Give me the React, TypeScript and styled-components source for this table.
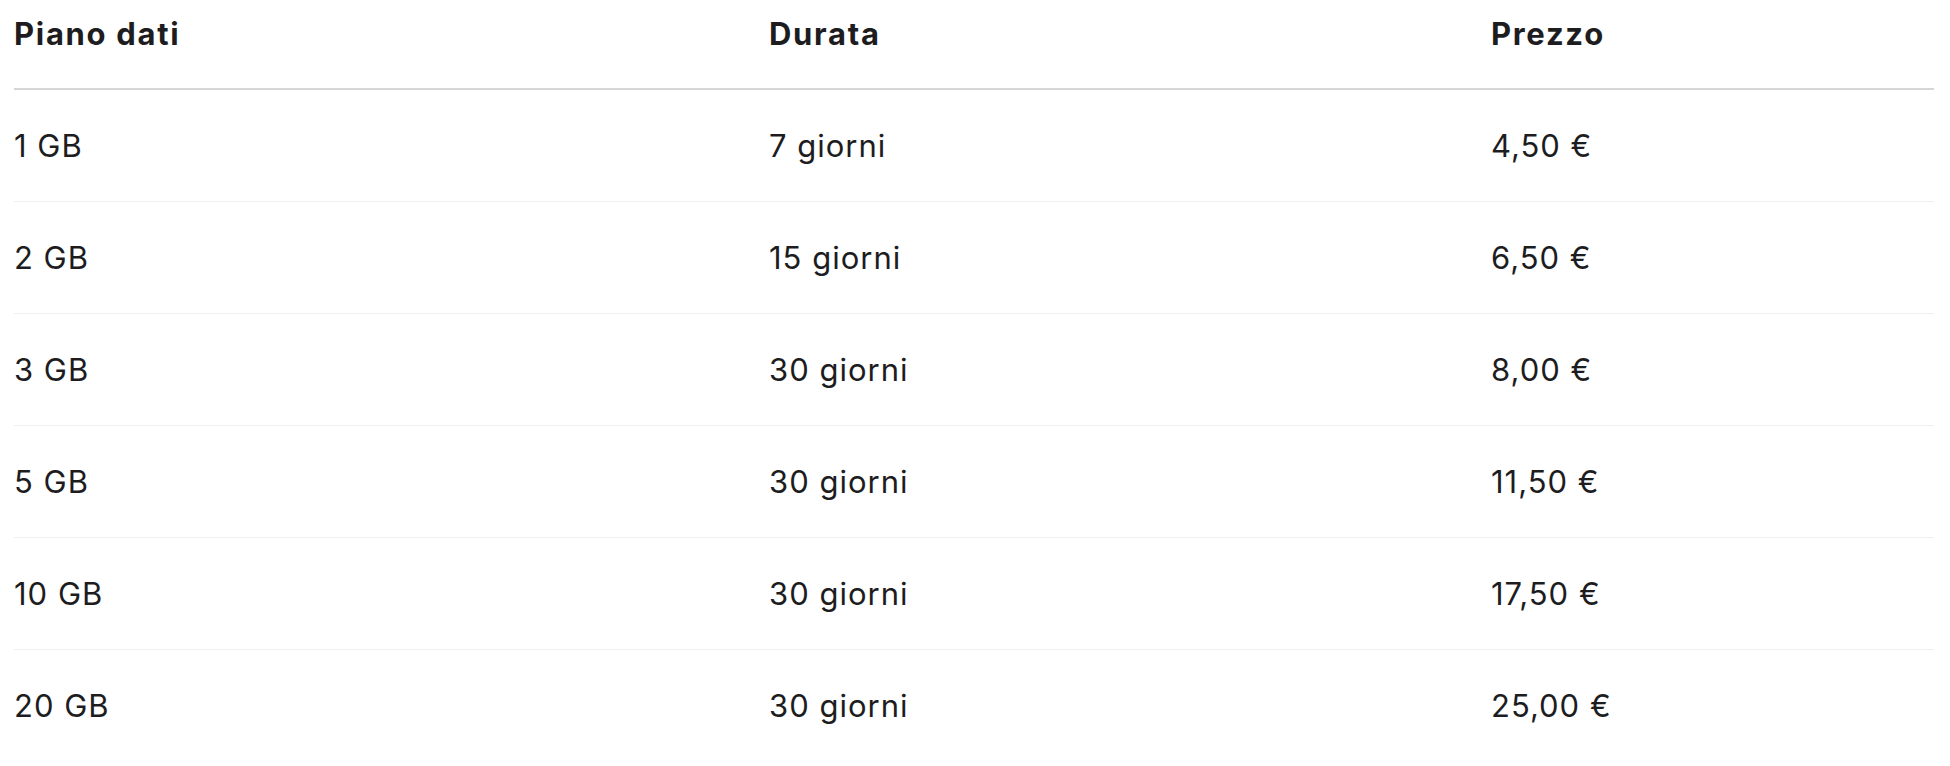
import styled, { createGlobalStyle } from 'styled-components'

const GlobalStyle = createGlobalStyle`
  html, body {
    margin: 0;
    padding: 0;
    background: #fff;
  }
  body {
    font-family: Inter, 'Liberation Sans', sans-serif;
    color: #1d1d1f;
  }
`

interface Plan {
  data: string;
  days: string;
  price: string;
}

const plans: Plan[] = [
  { data: '1 GB', days: '7 giorni', price: '4,50 €' },
  { data: '2 GB', days: '15 giorni', price: '6,50 €' },
  { data: '3 GB', days: '30 giorni', price: '8,00 €' },
  { data: '5 GB', days: '30 giorni', price: '11,50 €' },
  { data: '10 GB', days: '30 giorni', price: '17,50 €' },
  { data: '20 GB', days: '30 giorni', price: '25,00 €' },
]

const App = () => {
  return (
    <>
      <GlobalStyle />
      <Wrap>
        <Table>
          <HeadRow>
            <Cell>Piano dati</Cell>
            <Cell>Durata</Cell>
            <Cell>Prezzo</Cell>
          </HeadRow>
          {plans.map((p, i) => (
            <Row key={p.data} $last={i === plans.length - 1}>
              <Cell>{p.data}</Cell>
              <Cell>{p.days}</Cell>
              <Cell>{p.price}</Cell>
            </Row>
          ))}
        </Table>
      </Wrap>
    </>
  )
}

const Wrap = styled.div`
  padding: 0 16px 0 14px;
`

const Table = styled.div`
  display: flex;
  flex-direction: column;
  width: 100%;
`

const HeadRow = styled.div`
  display: grid;
  grid-template-columns: 755px 722px 1fr;
  padding: 16px 0 36px;
  border-bottom: 2px solid #d6d6d6;
  font-size: 31px;
  line-height: 36px;
  font-weight: 700;
  letter-spacing: 1.7px;
`

const Row = styled.div<{ $last?: boolean }>`
  display: grid;
  grid-template-columns: 755px 722px 1fr;
  padding: 38px 0 37px;
  border-bottom: 1px solid ${(p) => (p.$last ? 'transparent' : '#efefef')};
  font-size: 31px;
  line-height: 36px;
  font-weight: 400;
  letter-spacing: 1px;
`

const Cell = styled.div`
  white-space: nowrap;
`

export default App
